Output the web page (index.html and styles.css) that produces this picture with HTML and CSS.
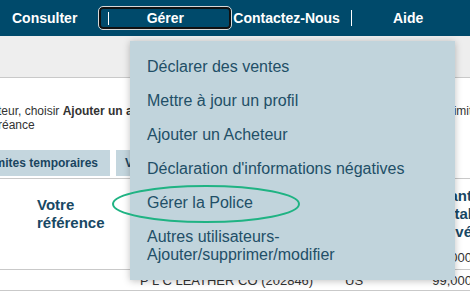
FILE: index.html
```html
<!DOCTYPE html>
<html lang="fr">
  <head>
    <meta charset="UTF-8" />
    <title>Gérer – Assurance-crédit</title>
    <link rel="stylesheet" href="styles.css" />
  </head>
  <body>
    <header class="topnav">
      <a class="nav-link nav-consulter" href="#">Consulter</a>
      <a class="nav-link nav-active" href="#">Gérer</a>
      <a class="nav-link" href="#">Contactez-Nous</a>
      <span class="nav-sep"></span>
      <a class="nav-link nav-aide" href="#">Aide</a>
    </header>

    <div class="band"></div>

    <main class="content">
      <div class="intro">
        <div class="intro-line">
          <span class="intro-left">teur, choisir <b>Ajouter un acheteur</b> dans le menu Gérer. Pour une</span>
          <span class="intro-right">limite</span>
        </div>
        <div class="intro-line">réance</div>
      </div>

      <div class="tabs">
        <div class="tab tab-first"><span>Limites temporaires</span></div>
        <div class="tab tab-second"><span>Vue des acheteurs</span></div>
      </div>

      <div class="table">
        <div class="row row-head">
          <div class="cell cell-ref">Votre<br />référence</div>
          <div class="cell cell-name"></div>
          <div class="cell cell-country"></div>
          <div class="cell cell-amount">Montant<br />total<br />approuvé</div>
        </div>
        <div class="row row-first">
          <div class="cell cell-ref"></div>
          <div class="cell cell-name"></div>
          <div class="cell cell-country"></div>
          <div class="cell cell-amount">100,000</div>
        </div>
        <div class="row row-data">
          <div class="cell cell-ref"></div>
          <div class="cell cell-name">P L C LEATHER CO (202846)</div>
          <div class="cell cell-country">US</div>
          <div class="cell cell-amount">99,000</div>
        </div>
      </div>
    </main>

    <ul class="dropdown">
      <li><a href="#">Déclarer des ventes</a></li>
      <li><a href="#">Mettre à jour un profil</a></li>
      <li><a href="#">Ajouter un Acheteur</a></li>
      <li><a href="#">Déclaration d'informations négatives</a></li>
      <li><a href="#">Gérer la Police</a></li>
      <li><a href="#">Autres utilisateurs-<br />Ajouter/supprimer/modifier</a></li>
    </ul>

    <svg class="highlight" width="192" height="42" viewBox="0 0 192 42">
      <ellipse cx="96" cy="21" rx="93" ry="18" fill="none" stroke="#1fb383" stroke-width="2" />
    </svg>
  </body>
</html>
```

FILE: styles.css
```css
:root {
  --nav-bg: #004a6b;
  --menu-bg: #c1d4dc;
  --menu-text: #214f67;
  --tab-bg: #c4d6de;
  --head-text: #184864;
  --line: #c9c9c9;
}

body {
  margin: 0;
  font-family: "Liberation Sans", Arial, sans-serif;
  background: #fff;
  color: #333;
  width: 470px;
  height: 295px;
  overflow: hidden;
}

/* Navigation */
.topnav {
  display: flex;
  align-items: center;
  height: 36px;
  padding-left: 12px;
  background: var(--nav-bg);
}

.nav-link {
  color: #fff;
  font-weight: bold;
  font-size: 14px;
  text-decoration: none;
  white-space: nowrap;
}

.nav-consulter {
  margin-right: 22px;
}

.nav-active {
  position: relative;
  box-sizing: border-box;
  width: 132px;
  height: 22px;
  margin-right: 2px;
  display: flex;
  align-items: center;
  justify-content: center;
  border: 2px solid #111;
  border-radius: 4px;
  outline: 1px solid #d8d8d8;
}

.nav-active::before {
  content: "";
  position: absolute;
  left: 7px;
  top: 3px;
  width: 1px;
  height: 13px;
  background: #fff;
}

.nav-sep {
  width: 1px;
  height: 16px;
  margin-left: 11px;
  background: #fff;
}

.nav-aide {
  margin-left: 41px;
}

/* Bandeau gris */
.band {
  height: 41px;
  background: #eeeeee;
  border-bottom: 1px solid var(--line);
}

/* Contenu */
.content {
  padding-top: 26px;
}

.intro {
  font-size: 12px;
  line-height: 14px;
  color: #333;
}

.intro-line {
  display: flex;
  margin-left: -2px;
  white-space: nowrap;
}

.intro-left {
  flex: 1;
  overflow: hidden;
}

.intro-right {
  width: 19px;
  overflow: hidden;
}

.tabs {
  display: flex;
  gap: 6px;
  margin-top: 18px;
  height: 26px;
}

.tab {
  display: flex;
  align-items: center;
  overflow: hidden;
  background: var(--tab-bg);
  color: #1a4560;
  font-weight: bold;
  font-size: 12px;
  white-space: nowrap;
}

.tab span {
  flex-shrink: 0;
}

.tab-first {
  width: 110px;
  justify-content: flex-end;
  padding-right: 12px;
  box-sizing: border-box;
}

.tab-second {
  width: 200px;
  padding-left: 9px;
}

/* Tableau */
.table {
  width: 472px;
  margin-top: 2px;
  border-top: 1px solid var(--line);
}

.row {
  display: flex;
  align-items: center;
}

.row-head {
  height: 67px;
  align-items: flex-start;
}

.row-first {
  height: 23px;
  border-bottom: 1px solid var(--line);
}

.row-data {
  height: 20px;
  border-bottom: 1px solid var(--line);
}

.cell {
  font-size: 13px;
  color: #333;
  white-space: nowrap;
}

.cell-ref {
  width: 140px;
  padding-left: 37px;
  box-sizing: border-box;
}

.row-head .cell-ref {
  padding-top: 17px;
  font-size: 15px;
  line-height: 18px;
  font-weight: bold;
  color: var(--head-text);
}

.cell-name {
  width: 205px;
}

.cell-country {
  width: 60px;
}

.cell-amount {
  flex: 1;
  text-align: right;
}

.row-head .cell-amount {
  padding-top: 8px;
  font-size: 15px;
  line-height: 18px;
  font-weight: bold;
  color: var(--head-text);
}

/* Menu déroulant */
.dropdown {
  position: absolute;
  left: 130px;
  top: 41px;
  width: 325px;
  margin: 0;
  padding: 9px 0 8px;
  list-style: none;
  background: var(--menu-bg);
  box-shadow: 0 1px 7px rgba(0, 0, 0, 0.25);
}

.dropdown a {
  display: block;
  padding: 8px 17px;
  font-size: 16px;
  line-height: 18px;
  color: var(--menu-text);
  text-decoration: none;
}

.highlight {
  position: absolute;
  left: 110px;
  top: 183px;
}
```
